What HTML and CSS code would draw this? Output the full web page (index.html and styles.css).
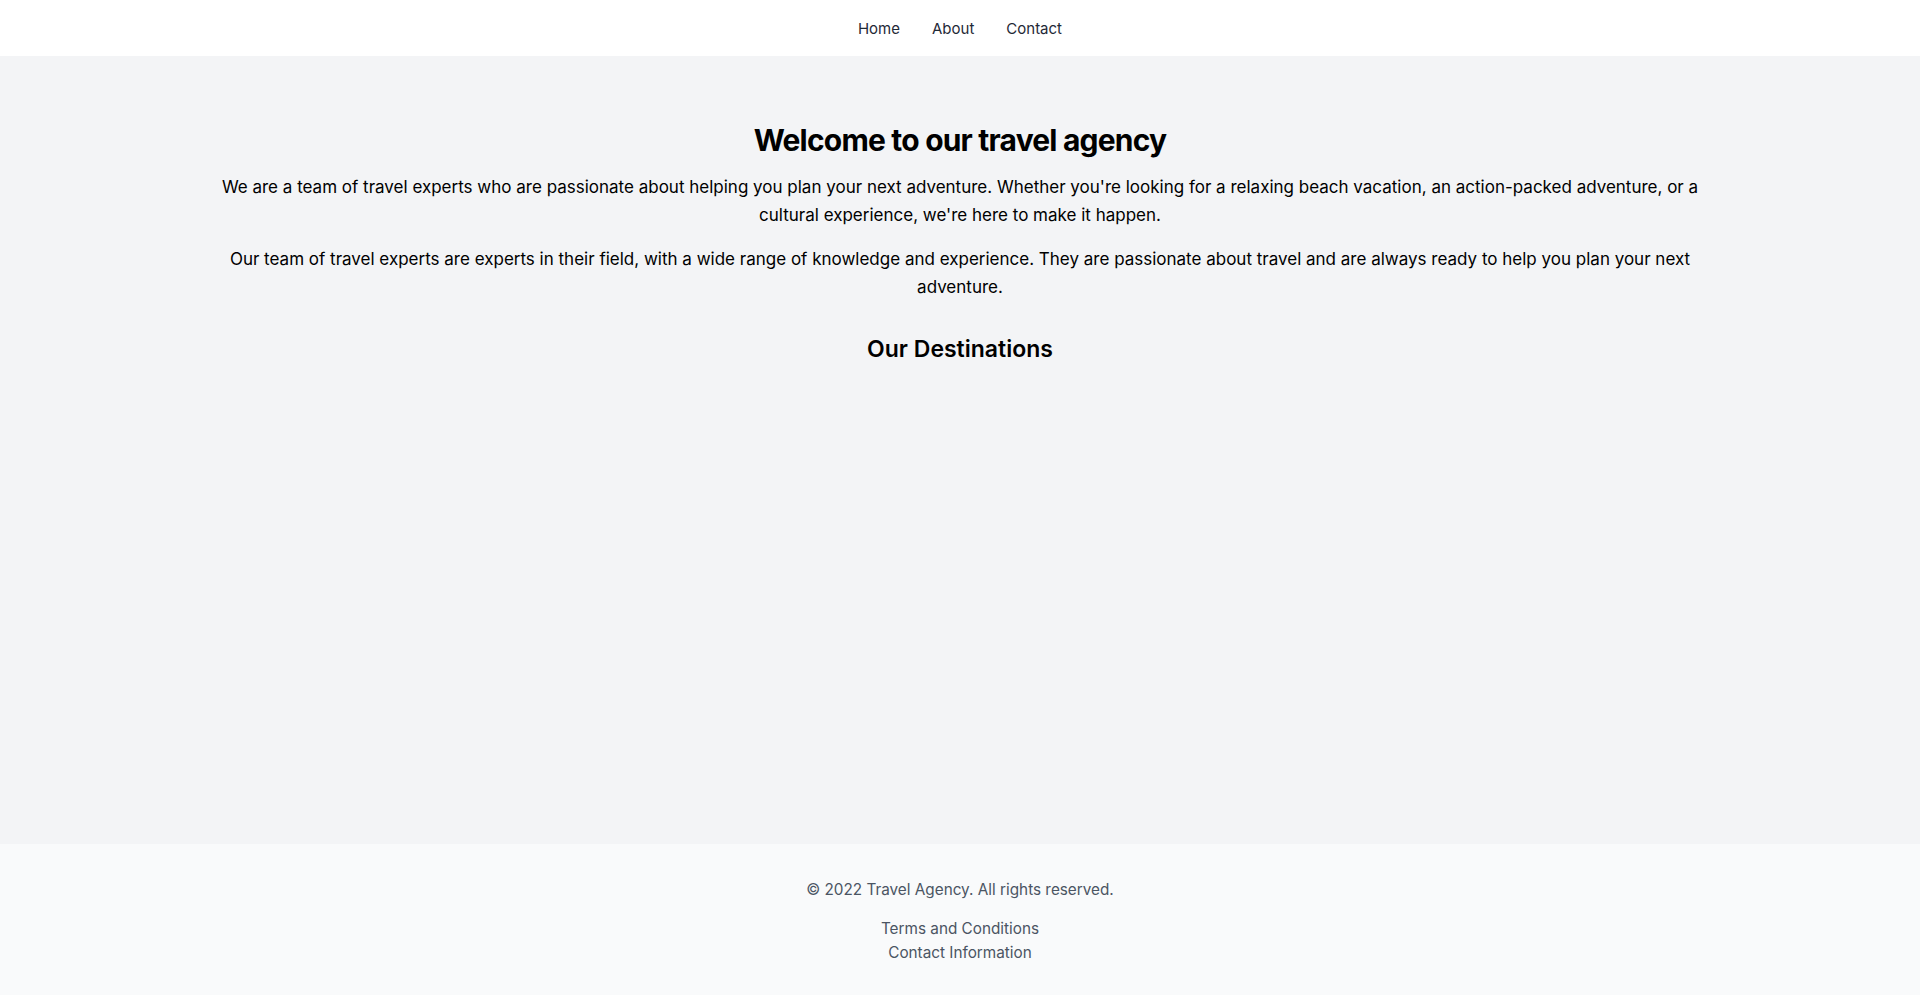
FILE: index.html
```html
<!DOCTYPE html>
<html lang="en">
<head>
<meta charset="utf-8">
<title>Travel Agency</title>
<link rel="stylesheet" href="styles.css">
</head>
<body>
<header class="site-header">
  <nav class="nav">
    <a class="nav-link" href="#">Home</a>
    <a class="nav-link" href="#">About</a>
    <a class="nav-link" href="#">Contact</a>
  </nav>
</header>
<main class="main">
  <div class="container">
    <h1 class="title">Welcome to our travel agency</h1>
    <p class="text">We are a team of travel experts who are passionate about helping you plan your next adventure. Whether you're looking for a relaxing beach vacation, an action-packed adventure, or a cultural experience, we're here to make it happen.</p>
    <p class="text">Our team of travel experts are experts in their field, with a wide range of knowledge and experience. They are passionate about travel and are always ready to help you plan your next adventure.</p>
    <h2 class="subtitle">Our Destinations</h2>
  </div>
</main>
<footer class="site-footer">
  <p class="copyright">© 2022 Travel Agency. All rights reserved.</p>
  <ul class="footer-links">
    <li><a class="footer-link" href="#">Terms and Conditions</a></li>
    <li><a class="footer-link" href="#">Contact Information</a></li>
  </ul>
</footer>
</body>
</html>
```

FILE: styles.css
```css
* { box-sizing: border-box; }
html, body { margin: 0; padding: 0; }
body {
  font-family: Inter, "Noto Sans", "Liberation Sans", sans-serif;
  min-height: 100vh;
  display: flex;
  flex-direction: column;
  color: #000;
  background: #f3f4f6;
}
.site-header {
  background: #fff;
  height: 56px;
  padding-top: 2px;
  display: flex;
  align-items: center;
  justify-content: center;
}
.nav { display: flex; }
.nav-link {
  color: #1f2937;
  text-decoration: none;
  font-size: 15px;
  line-height: 20px;
  padding: 0 16px;
}
.main {
  flex: 1;
  background: #f3f4f6;
  padding-top: 66px;
}
.container {
  max-width: 1536px;
  margin: 0 auto;
  padding: 0 16px;
  text-align: center;
}
.title {
  font-size: 30px;
  line-height: 36px;
  font-weight: 700;
  margin: 0 0 15px;
  letter-spacing: -0.8px;
}
.text {
  font-size: 17px;
  line-height: 28px;
  margin: 0 0 16px;
}
.subtitle {
  font-size: 23px;
  line-height: 32px;
  font-weight: 600;
  margin: 32px 0 0;
}
.site-footer {
  background: #f9fafb;
  padding: 34px 0 30px;
  text-align: center;
  color: #4b5563;
  font-size: 15.3px;
  line-height: 24px;
}
.copyright { margin: 0 0 15px; }
.footer-links { list-style: none; margin: 0; padding: 0; }
.footer-link { color: #4b5563; text-decoration: none; }
```
